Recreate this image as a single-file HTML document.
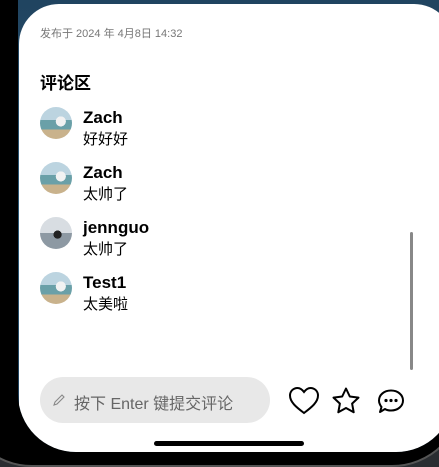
<!DOCTYPE html>
<html><head><meta charset="utf-8"><style>
*{margin:0;padding:0;box-sizing:border-box}
html,body{width:439px;height:464px;overflow:hidden;background:#2a2d31;font-family:"Liberation Sans","Noto Sans CJK SC",sans-serif}
.frame{position:absolute;left:-40px;top:-200px;width:504px;height:667px;background:#000;border-radius:0 0 72px 72px;border:2px solid #555}
.screen{position:absolute;left:18px;top:-100px;width:436px;height:552px;border-radius:0 0 58px 58px;overflow:hidden;background:linear-gradient(180deg,#1b3a55,#2c5a78 60%,#1b3a55)}
.sheet{position:absolute;left:1px;top:104px;right:0;bottom:0;background:#fff;border-radius:40px 40px 0 0}
.a{position:absolute;font-size:11px;color:#777}
.h{position:absolute;font-size:17px;font-weight:bold;color:#000}
.av{position:absolute;left:40px;width:32px;height:32px;border-radius:50%;background:radial-gradient(circle at 65% 45%,#f2f2f2 0 18%,transparent 19%),linear-gradient(180deg,#bcd4e0 0 40%,#6aa0a8 40% 70%,#c9b28c 70%)}
.av.j{background:radial-gradient(ellipse at 55% 55%,#222 0 16%,transparent 17%),linear-gradient(180deg,#d8dde2 0 50%,#8d99a3 50%)}
.n{position:absolute;left:83px;font-size:17px;font-weight:bold;color:#000}
.c{position:absolute;left:83px;font-size:15px;color:#000}
</style></head><body>
<div class="frame"></div>
<div class="screen"><div class="sheet"></div></div>
<div class="a" style="left:40px;top:25px">发布于 2024 年 4月8日 14:32</div>
<div class="h" style="left:40px;top:69px">评论区</div>
<div class="av" style="top:107px"></div><div class="n" style="top:108px">Zach</div><div class="c" style="top:128px">好好好</div>
<div class="av" style="top:162px"></div><div class="n" style="top:163px">Zach</div><div class="c" style="top:183px">太帅了</div>
<div class="av j" style="top:217px"></div><div class="n" style="top:218px">jennguo</div><div class="c" style="top:238px">太帅了</div>
<div class="av" style="top:272px"></div><div class="n" style="top:273px">Test1</div><div class="c" style="top:293px">太美啦</div>
<div style="position:absolute;left:410px;top:232px;width:3px;height:138px;background:#888;border-radius:2px"></div>
<div style="position:absolute;left:40px;top:377px;width:230px;height:46px;border-radius:23px;background:#e8e8e8"></div>
<svg style="position:absolute;left:52px;top:393px" width="14" height="14" viewBox="0 0 14 14"><path d="M2 12 L3 9 L10 2 L12 4 L5 11 Z" fill="none" stroke="#888" stroke-width="1.1"/></svg>
<div style="position:absolute;left:74px;top:390px;font-size:16px;color:#666">按下 Enter 键提交评论</div>
<svg style="position:absolute;left:288px;top:386px" width="32" height="30" viewBox="0 0 32 30"><path d="M16 27 C8 21 2 16 2 9.5 C2 5 5.5 2 9.5 2 C12.5 2 14.5 4 16 6 C17.5 4 19.5 2 22.5 2 C26.5 2 30 5 30 9.5 C30 16 24 21 16 27 Z" fill="none" stroke="#000" stroke-width="2"/></svg>
<svg style="position:absolute;left:331px;top:386px" width="30" height="30" viewBox="0 0 30 30"><path d="M15 2.5 L18.8 10.5 L27.5 11.6 L21.1 17.6 L22.7 26.3 L15 22 L7.3 26.3 L8.9 17.6 L2.5 11.6 L11.2 10.5 Z" fill="none" stroke="#000" stroke-width="2" stroke-linejoin="round"/></svg>
<svg style="position:absolute;left:376px;top:388px" width="30" height="28" viewBox="0 0 30 28"><path d="M15 2.5 C22 2.5 27 7 27 12.5 C27 18 22 22.5 15 22.5 C12.5 22.5 10.5 22 9 21 L4 24 L5.5 19 C4 17 3 15 3 12.5 C3 7 8 2.5 15 2.5 Z" fill="none" stroke="#000" stroke-width="2" stroke-linejoin="round"/><circle cx="10" cy="12.5" r="1.6"/><circle cx="15" cy="12.5" r="1.6"/><circle cx="20" cy="12.5" r="1.6"/></svg>
<div style="position:absolute;left:154px;top:441px;width:150px;height:5px;border-radius:3px;background:#000"></div>
</body></html>
